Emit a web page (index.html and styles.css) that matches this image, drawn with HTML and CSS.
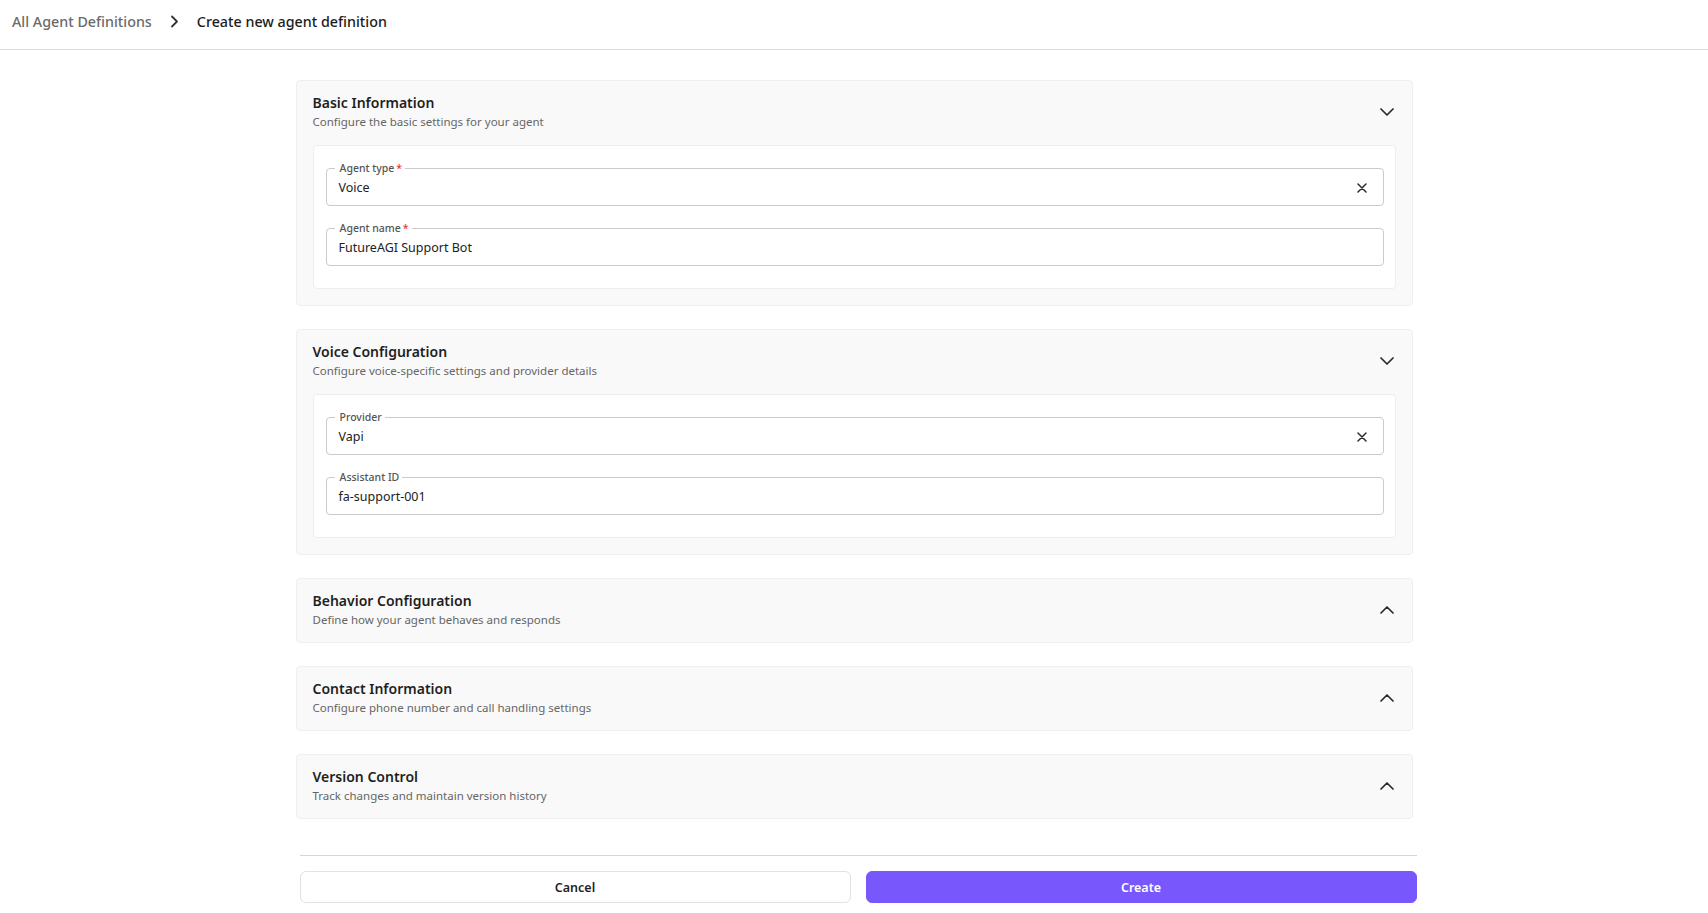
FILE: index.html
```html
<!DOCTYPE html>
<html lang="en">
<head>
<meta charset="utf-8">
<title>Create new agent definition</title>
<link rel="stylesheet" href="styles.css">
</head>
<body>
<header class="topbar">
  <nav class="crumbs">
    <span class="crumb-link">All Agent Definitions</span>
    <svg class="crumb-sep" width="9" height="13" viewBox="0 0 9 13"><polyline points="2,1.5 7,6.5 2,11.5" fill="none" stroke="#333" stroke-width="1.8" stroke-linecap="round" stroke-linejoin="round"/></svg>
    <span class="crumb-current">Create new agent definition</span>
  </nav>
</header>

<main class="page">
  <section class="panel">
    <div class="panel-head">
      <div class="panel-titles">
        <h2 class="panel-title">Basic Information</h2>
        <p class="panel-sub">Configure the basic settings for your agent</p>
      </div>
      <svg class="chev" width="14" height="8" viewBox="0 0 14 8"><polyline points="1,1 7,7 13,1" fill="none" stroke="#2b2b2b" stroke-width="1.7" stroke-linecap="round" stroke-linejoin="round"/></svg>
    </div>
    <div class="card">
      <div class="field">
        <span class="field-label">Agent type<span class="req">*</span></span>
        <span class="field-value">Voice</span>
        <svg class="clear" width="10" height="10" viewBox="0 0 10 10"><path d="M1 1 L9 9 M9 1 L1 9" stroke="#2b2b2b" stroke-width="1.5" stroke-linecap="round"/></svg>
      </div>
      <div class="field">
        <span class="field-label">Agent name<span class="req">*</span></span>
        <span class="field-value">FutureAGI Support Bot</span>
      </div>
    </div>
  </section>

  <section class="panel">
    <div class="panel-head">
      <div class="panel-titles">
        <h2 class="panel-title">Voice Configuration</h2>
        <p class="panel-sub">Configure voice-specific settings and provider details</p>
      </div>
      <svg class="chev" width="14" height="8" viewBox="0 0 14 8"><polyline points="1,1 7,7 13,1" fill="none" stroke="#2b2b2b" stroke-width="1.7" stroke-linecap="round" stroke-linejoin="round"/></svg>
    </div>
    <div class="card">
      <div class="field">
        <span class="field-label">Provider</span>
        <span class="field-value">Vapi</span>
        <svg class="clear" width="10" height="10" viewBox="0 0 10 10"><path d="M1 1 L9 9 M9 1 L1 9" stroke="#2b2b2b" stroke-width="1.5" stroke-linecap="round"/></svg>
      </div>
      <div class="field">
        <span class="field-label">Assistant ID</span>
        <span class="field-value">fa-support-001</span>
      </div>
    </div>
  </section>

  <section class="panel collapsed">
    <div class="panel-head">
      <div class="panel-titles">
        <h2 class="panel-title">Behavior Configuration</h2>
        <p class="panel-sub">Define how your agent behaves and responds</p>
      </div>
      <svg class="chev" width="14" height="8" viewBox="0 0 14 8"><polyline points="1,7 7,1 13,7" fill="none" stroke="#2b2b2b" stroke-width="1.7" stroke-linecap="round" stroke-linejoin="round"/></svg>
    </div>
  </section>

  <section class="panel collapsed">
    <div class="panel-head">
      <div class="panel-titles">
        <h2 class="panel-title">Contact Information</h2>
        <p class="panel-sub">Configure phone number and call handling settings</p>
      </div>
      <svg class="chev" width="14" height="8" viewBox="0 0 14 8"><polyline points="1,7 7,1 13,7" fill="none" stroke="#2b2b2b" stroke-width="1.7" stroke-linecap="round" stroke-linejoin="round"/></svg>
    </div>
  </section>

  <section class="panel collapsed">
    <div class="panel-head">
      <div class="panel-titles">
        <h2 class="panel-title">Version Control</h2>
        <p class="panel-sub">Track changes and maintain version history</p>
      </div>
      <svg class="chev" width="14" height="8" viewBox="0 0 14 8"><polyline points="1,7 7,1 13,7" fill="none" stroke="#2b2b2b" stroke-width="1.7" stroke-linecap="round" stroke-linejoin="round"/></svg>
    </div>
  </section>

  <footer class="actions">
    <button class="btn btn-cancel" type="button">Cancel</button>
    <button class="btn btn-create" type="button">Create</button>
  </footer>
</main>
</body>
</html>
```

FILE: styles.css
```css
* { box-sizing: border-box; }

html, body {
  margin: 0;
  padding: 0;
  background: #ffffff;
  font-family: "Noto Sans", "Open Sans", "Liberation Sans", sans-serif;
  color: #1f1f1f;
}

.topbar {
  height: 50px;
  border-bottom: 1px solid #dcdcdc;
  padding: 10px 0 0 12px;
}

.crumbs {
  display: flex;
  align-items: center;
  gap: 18px;
  height: 22px;
  font-size: 14.3px;
  font-weight: 500;
}

.crumb-link { color: #6b6b6b; }
.crumb-current { color: #1c1c1c; }
.crumb-sep { display: block; }

.page {
  width: 1117px;
  margin: 30px auto 0;
  display: flex;
  flex-direction: column;
  gap: 23px;
}

.panel {
  background: #f9f9f9;
  border: 1px solid #efefef;
  border-radius: 4px;
  padding: 12px 16px 16px;
}

.panel.collapsed { padding-bottom: 14px; }

.panel-head {
  display: flex;
  align-items: center;
  justify-content: space-between;
}

.chev { display: block; margin-right: 2px; }

.panel-title {
  margin: 0;
  font-size: 14px;
  line-height: 19px;
  font-weight: 600;
  color: #1f1f1f;
}

.panel-sub {
  margin: 2px 0 0;
  font-size: 11.5px;
  line-height: 16px;
  color: #666666;
}

.card {
  margin-top: 15px;
  background: #ffffff;
  border: 1px solid #eeeeee;
  border-radius: 4px;
  padding: 22px 11px 22px 12px;
  display: flex;
  flex-direction: column;
  gap: 22px;
}

.field {
  position: relative;
  height: 38px;
  border: 1px solid #cbcbcb;
  border-radius: 4px;
  display: flex;
  align-items: center;
  padding: 1px 16px 0 12px;
  background: #ffffff;
}

.field-label {
  position: absolute;
  top: -8px;
  left: 8px;
  padding: 0 3px 0 5px;
  background: #ffffff;
  font-size: 10.5px;
  line-height: 14px;
  font-weight: 500;
  color: #555555;
}

.req {
  color: #e53935;
  margin-left: 2px;
}

.field-value {
  flex: 1;
  font-size: 12.5px;
  color: #222222;
}

.clear { display: block; }

.actions {
  margin: 13px -4px 0 4px;
  border-top: 1px solid #d6d6d6;
  padding-top: 15px;
  display: grid;
  grid-template-columns: 1fr 1fr;
  gap: 15px;
}

.btn {
  height: 32px;
  border-radius: 6px;
  font-family: inherit;
  font-size: 12.5px;
  font-weight: 600;
  cursor: pointer;
}

.btn-cancel {
  background: #ffffff;
  border: 1px solid #e2e2e2;
  color: #1f1f1f;
}

.btn-create {
  background: #7857fd;
  border: 1px solid #7857fd;
  color: #ffffff;
}
```
